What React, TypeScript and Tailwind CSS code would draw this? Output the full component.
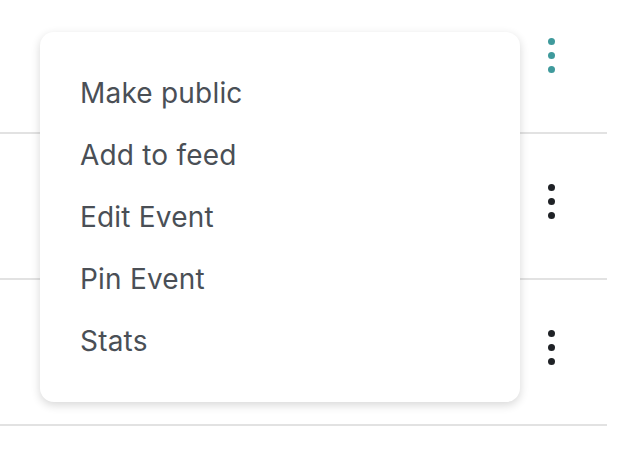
const items = ['Make public', 'Add to feed', 'Edit Event', 'Pin Event', 'Stats']

function Dots({ active }: { active?: boolean }) {
  const color = active ? 'bg-[#3f9a9c]' : 'bg-[#1f2226]'
  return (
    <div className="flex flex-col gap-[7px]">
      <span className={`block w-[7px] h-[7px] rounded-full ${color}`} />
      <span className={`block w-[7px] h-[7px] rounded-full ${color}`} />
      <span className={`block w-[7px] h-[7px] rounded-full ${color}`} />
    </div>
  )
}

export default function App() {
  return (
    <div className="relative w-[632px] h-[456px] bg-white overflow-hidden font-['Inter',sans-serif]">
      <div className="-mt-[12px] w-[607px]">
        {[true, false, false].map((active, i) => (
          <div
            key={i}
            className="h-[146px] border-b-2 border-[#e2e2e2] flex justify-end items-start pt-[50px] pr-[52px]"
          >
            <Dots active={active} />
          </div>
        ))}
      </div>

      <div className="absolute left-[40px] top-[32px] w-[480px] h-[370px] bg-white rounded-[14px] shadow-[0_3px_10px_rgba(0,0,0,0.16)] py-[30px] px-[40px]">
        <ul>
          {items.map((item) => (
            <li key={item} className="h-[62px] flex items-center text-[28px] text-[#4a4f56] tracking-[0.2px]">
              {item}
            </li>
          ))}
        </ul>
      </div>
    </div>
  )
}
